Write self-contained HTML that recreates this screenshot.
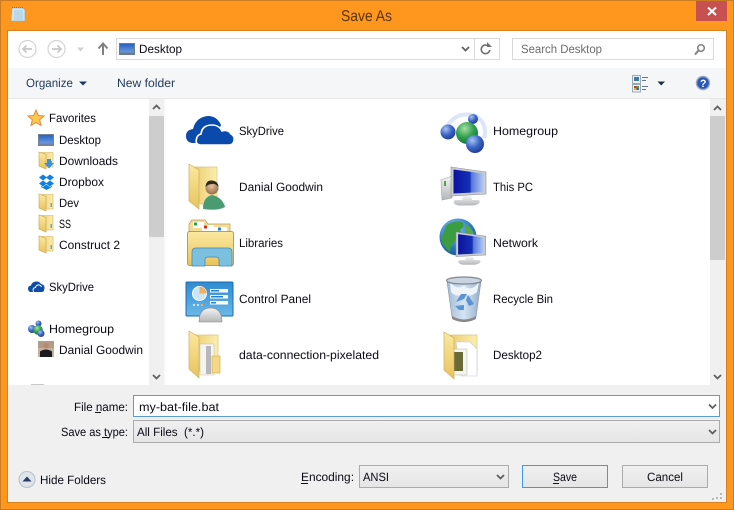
<!DOCTYPE html>
<html><head><meta charset="utf-8"><title>Save As</title>
<style>
html,body{margin:0;padding:0;width:734px;height:510px;overflow:hidden;background:#ff961e}
svg{display:block}
text{font-family:"Liberation Sans",sans-serif;font-size:12px;fill:#0a0a14;text-rendering:geometricPrecision}
</style></head><body>
<svg width="734" height="510" viewBox="0 0 734 510" xmlns="http://www.w3.org/2000/svg">
<defs>
<linearGradient id="fy" x1="0" y1="0" x2="0" y2="1"><stop offset="0" stop-color="#fbe9a0"/><stop offset="1" stop-color="#e8c35c"/></linearGradient>
<linearGradient id="fb" x1="0" y1="0" x2="1" y2="0"><stop offset="0" stop-color="#eccd6e"/><stop offset="1" stop-color="#fbeeb0"/></linearGradient>
<linearGradient id="sc" x1="0" y1="0" x2="1" y2="0"><stop offset="0" stop-color="#0c12a0"/><stop offset=".55" stop-color="#1430b4"/><stop offset=".6" stop-color="#5478dc"/><stop offset="1" stop-color="#b4c8f4"/></linearGradient>
<linearGradient id="dt" x1="0" y1="0" x2="0" y2="1"><stop offset="0" stop-color="#2a62c0"/><stop offset="1" stop-color="#6a9ae0"/></linearGradient>
<linearGradient id="btn" x1="0" y1="0" x2="0" y2="1"><stop offset="0" stop-color="#f0f0f0"/><stop offset="1" stop-color="#e5e5e5"/></linearGradient>
<linearGradient id="met" x1="0" y1="0" x2="0" y2="1"><stop offset="0" stop-color="#f4f4f4"/><stop offset="1" stop-color="#b4b6b8"/></linearGradient>
<radialGradient id="sb" cx=".35" cy=".3" r=".8"><stop offset="0" stop-color="#a8c4f4"/><stop offset=".5" stop-color="#3c68c8"/><stop offset="1" stop-color="#1c3488"/></radialGradient>
<radialGradient id="sg" cx=".4" cy=".3" r=".8"><stop offset="0" stop-color="#a8e0a0"/><stop offset=".5" stop-color="#30a050"/><stop offset="1" stop-color="#106830"/></radialGradient>
<radialGradient id="glb" cx=".4" cy=".3" r=".8"><stop offset="0" stop-color="#8cc8f0"/><stop offset=".6" stop-color="#2878c8"/><stop offset="1" stop-color="#104888"/></radialGradient>
<radialGradient id="hd" cx=".45" cy=".35" r=".7"><stop offset="0" stop-color="#e8c09c"/><stop offset="1" stop-color="#8c6844"/></radialGradient>
<linearGradient id="bin" x1="0" y1="0" x2="1" y2="0"><stop offset="0" stop-color="#a4bcd4"/><stop offset=".5" stop-color="#d4e4f4"/><stop offset="1" stop-color="#94acc8"/></linearGradient>
<linearGradient id="cp" x1="0" y1="0" x2="0" y2="1"><stop offset="0" stop-color="#2f8ad0"/><stop offset="1" stop-color="#6ab8e8"/></linearGradient>
<g id="sf">
<path d="M2 .5H14V15H4Z" fill="url(#fb)" stroke="#d0ae5c" stroke-width=".6"/>
<path d="M0 0L7 2.500V17L0 14Z" fill="url(#fy)" stroke="#c6a450" stroke-width=".6"/>
<rect x="11.500" y="9" width="1.500" height="4" fill="#5fa8e0"/>
</g>
<g id="chev"><path d="M-3.500 -2L0 1.500L3.500 -2" fill="none" stroke="#606060" stroke-width="1.800"/></g>
<g id="mon">
<path d="M0 0L35 5V27L0 29Z" fill="#c8ccd0" stroke="#8c9094" stroke-width=".6"/>
<path d="M2.500 2.500L32.500 6.500V25L2.500 26.500Z" fill="url(#sc)"/>
<path d="M12 29H20L21 33H28Q31 37 22 38.500H8Q0 37 4 33H11Z" fill="url(#met)"/>
</g>
</defs>

<!-- window frame -->
<rect width="734" height="510" fill="#ff961e"/>
<rect x=".5" y=".5" width="733" height="509" fill="none" stroke="#c97c22"/>
<rect x="7" y="30" width="720" height="473" fill="#d68020"/>

<!-- title bar -->
<path d="M12 8H23L25 10V21H11Z" fill="#cfe6f2" stroke="#8aa4b4" stroke-width=".6"/>
<path d="M12 7.500H23" stroke="#6c7c88" stroke-dasharray="1 1"/>
<path d="M14 11H23M14 13H23M14 15H23M14 17H23M14 19H23" stroke="#9cc0d4" stroke-width=".8"/>
<text x="341" y="21" textLength="51" lengthAdjust="spacingAndGlyphs" style="font-size:15.500px;fill:#59360c">Save As</text>
<rect x="696" y="1" width="31" height="20" fill="#c75050"/>
<path d="M708 7.500L716 15M716 7.500L708 15" stroke="#fff" stroke-width="2"/>

<!-- client -->
<rect x="8" y="31" width="718" height="471" fill="#f0f0f0"/>
<rect x="8" y="31" width="718" height="37" fill="#fff"/>
<rect x="8" y="68" width="718" height="30" fill="#f5f6f7"/>
<rect x="8" y="98" width="718" height="1" fill="#e6e6e6"/>

<!-- nav buttons -->
<circle cx="27.500" cy="49" r="8.500" fill="#fff" stroke="#d4d4d4" stroke-width="1.200"/>
<path d="M32 49H23M26.500 45.500L23 49L26.500 52.500" fill="none" stroke="#c8c8c8" stroke-width="1.800"/>
<circle cx="56.500" cy="49" r="8.500" fill="#fff" stroke="#d4d4d4" stroke-width="1.200"/>
<path d="M52 49H61M57.500 45.500L61 49L57.500 52.500" fill="none" stroke="#c8c8c8" stroke-width="1.800"/>
<path d="M77 47.500H84L80.500 51.500Z" fill="#d0d0d0"/>
<path d="M103 55V44M98.500 48.500L103 43.500L107.500 48.500" fill="none" stroke="#808080" stroke-width="2"/>

<!-- address bar -->
<rect x="116.500" y="38.500" width="383" height="21" fill="#fff" stroke="#d9d9d9"/>
<rect x="474" y="39" width="1" height="20" fill="#d9d9d9"/>
<rect x="119" y="43" width="16" height="12" fill="#6c7c90"/>
<rect x="120" y="44" width="14" height="8.500" fill="url(#dt)"/>
<text x="139" y="53" textLength="43" lengthAdjust="spacingAndGlyphs">Desktop</text>
<use href="#chev" x="465.500" y="49"/>
<path d="M488.500 46.200A4.300 4.300 0 1 0 489.800 50" fill="none" stroke="#707070" stroke-width="1.600"/>
<path d="M487 42V47H492Z" fill="#707070"/>
<rect x="512.500" y="38.500" width="201" height="21" fill="#fff" stroke="#d9d9d9"/>
<text x="521" y="53" textLength="81" lengthAdjust="spacingAndGlyphs" style="fill:#6d6d6d">Search Desktop</text>
<circle cx="701" cy="48" r="3.300" fill="none" stroke="#808080" stroke-width="1.500"/>
<path d="M698.500 50.500L695 54.500" stroke="#808080" stroke-width="2"/>

<!-- command bar -->
<text x="26" y="87" textLength="47" lengthAdjust="spacingAndGlyphs" style="fill:#1e395b">Organize</text>
<path d="M79 81.500H87L83 85.500Z" fill="#1e395b"/>
<text x="117" y="87" textLength="58" lengthAdjust="spacingAndGlyphs" style="fill:#1e395b">New folder</text>
<rect x="632.500" y="75.500" width="8" height="8" fill="#e8f0f8" stroke="#8898a8" stroke-width=".8"/>
<rect x="634" y="77" width="5" height="4" fill="#3a7aa8"/>
<rect x="632.500" y="84.500" width="8" height="7.500" fill="#f0f0f0" stroke="#8898a8" stroke-width=".8"/>
<rect x="634" y="86" width="2.500" height="2" fill="#c04030"/><rect x="636.500" y="86" width="2.500" height="2" fill="#50a040"/><rect x="634" y="88" width="2.500" height="2" fill="#d8b030"/><rect x="636.500" y="88" width="2.500" height="2" fill="#3060c0"/>
<path d="M642 77.500H648M642 80.500H646M642 86.500H648M642 89.500H646" stroke="#6a7480"/>
<path d="M657.500 81.500H665L661.200 85.500Z" fill="#1e2f48"/>
<circle cx="703" cy="83" r="6.500" fill="#2a58b8" stroke="#9aa8c0" stroke-width="1.400"/>
<text x="700" y="87" style="font-size:10.500px;font-weight:bold;fill:#fff">?</text>

<!-- nav pane -->
<rect x="8" y="99" width="141" height="286" fill="#fff"/>
<rect x="149" y="99" width="15" height="286" fill="#f0f0f0"/>
<rect x="164" y="99" width="2" height="286" fill="#fafafa"/>
<rect x="149" y="116" width="15" height="121" fill="#cdcdcd"/>
<use href="#chev" transform="translate(156.500 107) scale(1 -1)"/>
<use href="#chev" x="156.500" y="377"/>

<path d="M36 110L38.300 115.500L44 116L39.700 119.800L41 125.500L36 122.500L31 125.500L32.300 119.800L28 116L33.700 115.500Z" fill="#fcc850" stroke="#e88838" stroke-width="1"/>
<text x="49" y="122" textLength="47" lengthAdjust="spacingAndGlyphs">Favorites</text>

<rect x="38" y="134" width="16" height="12" fill="#72849c"/>
<rect x="39" y="135" width="14" height="8.500" fill="url(#dt)"/>
<text x="59" y="144" textLength="42" lengthAdjust="spacingAndGlyphs">Desktop</text>

<use href="#sf" x="39" y="152"/>
<path d="M47 159H51V163H54L49 168.500L44 163H47Z" fill="#3a94dc"/>
<text x="59" y="165" textLength="59" lengthAdjust="spacingAndGlyphs">Downloads</text>

<g fill="#0d7fe8">
<path d="M43 174.500L47 177.500L43 180.500L39 177.500Z"/>
<path d="M50 174.500L54 177.500L50 180.500L46 177.500Z"/>
<path d="M43 180.500L47 183.500L43 186.500L39 183.500Z"/>
<path d="M50 180.500L54 183.500L50 186.500L46 183.500Z"/>
<path d="M46.500 184.500L50 187L52 186V187L46.500 190L41 187V186L43 187Z"/>
</g>
<text x="59" y="186" textLength="45" lengthAdjust="spacingAndGlyphs">Dropbox</text>

<use href="#sf" x="39" y="194"/>
<text x="59" y="207" textLength="20" lengthAdjust="spacingAndGlyphs">Dev</text>
<use href="#sf" x="39" y="215"/>
<text x="59" y="228" textLength="12" lengthAdjust="spacingAndGlyphs">SS</text>
<use href="#sf" x="39" y="236"/>
<text x="59" y="249" textLength="61" lengthAdjust="spacingAndGlyphs">Construct 2</text>

<path d="M30 292Q28 291 28 288.500Q28 286 31 285.500Q32 281.500 36.500 281.500Q39.500 281.500 41 284Q44 284.500 44.500 287Q44.500 292 42 292Z" fill="#0f4ea8"/>
<path d="M33.500 292Q32 288 35.500 287.500Q36.500 284.500 39.500 285Q41 285.500 41.500 287" fill="none" stroke="#fff" stroke-width="1"/>
<text x="49" y="291" textLength="45" lengthAdjust="spacingAndGlyphs">SkyDrive</text>

<circle cx="32" cy="329" r="4" fill="url(#sb)"/>
<circle cx="38.500" cy="323.500" r="3" fill="url(#sb)"/>
<circle cx="38" cy="330" r="4.800" fill="url(#sg)"/>
<circle cx="41" cy="333.500" r="3.500" fill="url(#sb)"/>
<text x="49" y="333" textLength="65" lengthAdjust="spacingAndGlyphs">Homegroup</text>

<rect x="38" y="341" width="16" height="16" fill="#c8b09c"/>
<rect x="38" y="341" width="16" height="7" fill="#b09c88"/>
<circle cx="46" cy="345.500" r="2.800" fill="#b8896c"/>
<path d="M40 357V351.500Q46 347.500 52 351.500V357Z" fill="#1c1c20"/>
<text x="59" y="354" textLength="84" lengthAdjust="spacingAndGlyphs">Danial Goodwin</text>
<rect x="31" y="384" width="13" height="1" fill="#c8c8c8"/>

<!-- file list -->
<rect x="166" y="99" width="544" height="286" fill="#fff"/>
<rect x="710" y="99" width="15" height="286" fill="#f0f0f0"/>
<rect x="710" y="116" width="15" height="144" fill="#cdcdcd"/>
<use href="#chev" transform="translate(717.500 108) scale(1 -1)"/>
<use href="#chev" x="717.500" y="377"/>

<!-- SkyDrive -->
<path d="M192 143Q186 142 186 136Q186 130 193 129Q196 117 208 116Q217 116 221 125L215 140L198 143Z" fill="#0a4aad"/>
<path d="M200 145Q195 144 196.500 139Q197 135 201 134Q202 125 212 125Q219 125 222 131Q228 129 231 134Q235 136 234 141Q233 145 229 145Z" fill="#0a4aad" stroke="#fff" stroke-width="1.600"/>
<text x="239" y="135" textLength="45" lengthAdjust="spacingAndGlyphs">SkyDrive</text>

<!-- Homegroup -->
<path d="M447 126Q458 110 476 116Q488 124 484 138" fill="none" stroke="#dce6f8" stroke-width="4"/>
<circle cx="473" cy="119" r="5" fill="url(#sb)"/>
<circle cx="448" cy="132" r="7.500" fill="url(#sb)"/>
<circle cx="467" cy="133" r="11" fill="url(#sg)"/>
<circle cx="475" cy="144" r="9" fill="url(#sb)"/>
<text x="493" y="135" textLength="65" lengthAdjust="spacingAndGlyphs">Homegroup</text>

<!-- Danial folder -->
<path d="M194 167H217V204H200Z" fill="url(#fb)" stroke="#dcc47c" stroke-width=".7"/>
<path d="M189 164L199 170V209L189 201Z" fill="url(#fy)" stroke="#cdaf60" stroke-width=".7"/>
<ellipse cx="214" cy="205" rx="12" ry="5" fill="#d8d8d8" opacity=".6"/>
<path d="M203 209Q203 197 212 195Q222 197 225 207Q218 211 203 209Z" fill="#4a9a72"/>
<circle cx="212" cy="188" r="6.500" fill="url(#hd)"/>
<path d="M205.500 187Q206 180 212 180.500Q218 181 218.500 187Q215 183 212 184Q208 184 205.500 187Z" fill="#2c2820"/>
<text x="239" y="191" textLength="84" lengthAdjust="spacingAndGlyphs">Danial Goodwin</text>

<!-- This PC -->
<path d="M441 180L452 176V198L442 200Z" fill="url(#met)" stroke="#a0a4a8" stroke-width=".6"/>
<rect x="444" y="181" width="2" height="5" fill="#50a050"/>
<use href="#mon" x="451" y="167"/>
<text x="493" y="191" textLength="40" lengthAdjust="spacingAndGlyphs">This PC</text>

<!-- Libraries -->
<path d="M189 224L192 220H205L208 224H230V232H189Z" fill="#f2dc98" stroke="#b89c58" stroke-width=".7"/>
<rect x="193" y="222" width="11" height="6" fill="#fff"/><rect x="194" y="222.500" width="3" height="3" fill="#30a040"/>
<rect x="202" y="225" width="12" height="6" fill="#fff"/><rect x="204" y="225.500" width="3" height="3" fill="#d03020"/>
<rect x="214" y="227" width="13" height="6" fill="#fff"/><rect x="218" y="227.500" width="3" height="3" fill="#2a80d0"/>
<rect x="187.500" y="231.500" width="46" height="34" rx="2" fill="url(#fy)" stroke="#b89c58"/>
<path d="M192 266V252Q192 248 196 248H228Q232 248 232 252V266H219V260Q219 257 216 257H208Q205 257 205 260V266Z" fill="#7cc0e0" stroke="#3a88b8" stroke-width=".7"/>
<text x="239" y="247" textLength="44" lengthAdjust="spacingAndGlyphs">Libraries</text>

<!-- Network -->
<circle cx="458" cy="237" r="18.500" fill="url(#glb)"/>
<path d="M446 226Q452 220 462 222Q466 226 460 230Q464 236 456 240Q450 246 450 252Q442 246 441 238Q444 232 446 226Z" fill="#3c9c40"/>
<path d="M466 224Q472 228 474 234L466 234Z" fill="#54a848"/>
<g transform="translate(456 232) scale(.85)"><use href="#mon"/></g>
<text x="493" y="247" textLength="45" lengthAdjust="spacingAndGlyphs">Network</text>

<!-- Control Panel -->
<rect x="186" y="282" width="47" height="34" rx="1" fill="url(#cp)" stroke="#1a6cb0" stroke-width="1"/>
<circle cx="199.500" cy="293.500" r="7" fill="#cce4f4" stroke="#fff"/>
<path d="M199.500 293.500V286.500A7 7 0 0 1 206.500 293.500Z" fill="#f0b060"/>
<rect x="210" y="289" width="18" height="3.500" fill="#fff"/><rect x="211" y="290" width="8" height="1.500" fill="#2a80c0"/>
<rect x="210" y="295" width="18" height="3.500" fill="#fff"/><rect x="211" y="296" width="12" height="1.500" fill="#2a80c0"/>
<rect x="210" y="301" width="18" height="3.500" fill="#fff"/><rect x="211" y="302" width="5" height="1.500" fill="#2a80c0"/>
<circle cx="194" cy="305" r="1.200" fill="#cfe8f8"/><circle cx="198" cy="305" r="1.200" fill="#cfe8f8"/><circle cx="202" cy="305" r="1.200" fill="#f0b060"/>
<path d="M199 322Q199 308 210.500 308Q222 308 222 322Z" fill="url(#met)" stroke="#888" stroke-width=".6"/>
<text x="239" y="303" textLength="72" lengthAdjust="spacingAndGlyphs">Control Panel</text>

<!-- Recycle Bin -->
<path d="M447 281L452 317Q464 324 476 317L481 281Z" fill="url(#bin)" stroke="#8c9cac" stroke-width=".7"/>
<path d="M450 282Q456 290 464 286Q472 292 479 282L477 292Q470 298 464 294Q456 298 451 292Z" fill="#eef4fa"/>
<ellipse cx="464" cy="280.500" rx="17.500" ry="3.500" fill="#c8d4e0" stroke="#808890" stroke-width="1.200"/>
<path d="M456 302L461 294L467 294L464 299ZM468 295L474 304L469 306L466 300ZM455 306L464 305V310H459Z" fill="#5a94d4"/>
<path d="M452 316Q464 323 476 316L476 319Q464 325 452 319Z" fill="#888"/>
<text x="493" y="303" textLength="60" lengthAdjust="spacingAndGlyphs">Recycle Bin</text>

<!-- data-connection -->
<path d="M193 335H218V372H200Z" fill="url(#fb)" stroke="#dcc47c" stroke-width=".7"/>
<path d="M200 344H214V375H200Z" fill="#f4f4f0" stroke="#c8c0a0" stroke-width=".5"/>
<path d="M206 346H211V374H206Z" fill="#b8b8bc"/>
<rect x="212" y="356" width="8" height="17" fill="#f4d884" stroke="#c8a850" stroke-width=".6"/>
<path d="M189 331L199 337V378L189 369Z" fill="url(#fy)" stroke="#cdaf60" stroke-width=".7"/>
<text x="239" y="359" textLength="140" lengthAdjust="spacingAndGlyphs">data-connection-pixelated</text>

<!-- Desktop2 -->
<path d="M449 335H477V372H454Z" fill="url(#fb)" stroke="#dcc47c" stroke-width=".7"/>
<path d="M456 342H470L477 349V376H461Z" fill="#fff" stroke="#c8c8c8" stroke-width=".6"/>
<rect x="451" y="349" width="16" height="26" fill="#f4f4f0" stroke="#c0c0b8" stroke-width=".6"/>
<rect x="453" y="352" width="10" height="19" fill="#6a6a38"/>
<path d="M444 332L454 338V379L444 370Z" fill="url(#fy)" stroke="#cdaf60" stroke-width=".7"/>
<text x="493" y="359" textLength="49" lengthAdjust="spacingAndGlyphs">Desktop2</text>

<!-- bottom form -->
<text x="74" y="411" textLength="54" lengthAdjust="spacingAndGlyphs">File name:</text>
<rect x="95" y="412" width="6" height="1" fill="#111"/>
<rect x="133.500" y="395.500" width="586" height="21" fill="#fff" stroke="#5b9bd8"/>
<text x="139" y="411" textLength="80" lengthAdjust="spacingAndGlyphs">my-bat-file.bat</text>
<use href="#chev" x="712.500" y="406.500"/>

<text x="61" y="436" textLength="67" lengthAdjust="spacingAndGlyphs">Save as type:</text>
<rect x="102" y="437" width="7" height="1" fill="#111"/>
<rect x="133.500" y="420.500" width="586" height="22" fill="url(#btn)" stroke="#ababab"/>
<text x="137" y="436" textLength="67" lengthAdjust="spacingAndGlyphs" xml:space="preserve">All Files  (*.*)</text>
<use href="#chev" x="712.500" y="432"/>

<circle cx="27" cy="479.500" r="8" fill="#dfe4ea" stroke="#b8bfc8"/>
<path d="M22.500 481.500H31.500L27 476.500Z" fill="#25396b"/>
<text x="40" y="484" textLength="66" lengthAdjust="spacingAndGlyphs">Hide Folders</text>

<text x="301" y="481" textLength="53" lengthAdjust="spacingAndGlyphs">Encoding:</text>
<rect x="301" y="483" width="7" height="1" fill="#111"/>
<rect x="359.500" y="465.500" width="149" height="22" fill="url(#btn)" stroke="#ababab"/>
<text x="363" y="481" textLength="26" lengthAdjust="spacingAndGlyphs">ANSI</text>
<use href="#chev" x="500.500" y="477"/>

<rect x="522.500" y="465.500" width="85" height="22" fill="url(#btn)" stroke="#3c9aec"/>
<text x="553" y="481" textLength="24" lengthAdjust="spacingAndGlyphs">Save</text>
<rect x="553" y="483" width="6" height="1" fill="#111"/>
<rect x="622.500" y="465.500" width="85" height="22" fill="url(#btn)" stroke="#ababab"/>
<text x="647" y="481" textLength="36" lengthAdjust="spacingAndGlyphs">Cancel</text>

<!-- grip -->
<g fill="#b8b8b8"><rect x="720" y="493" width="2" height="2"/><rect x="716" y="497" width="2" height="2"/><rect x="720" y="497" width="2" height="2"/><rect x="712" y="498" width="2" height="2"/></g>
</svg>
</body></html>
